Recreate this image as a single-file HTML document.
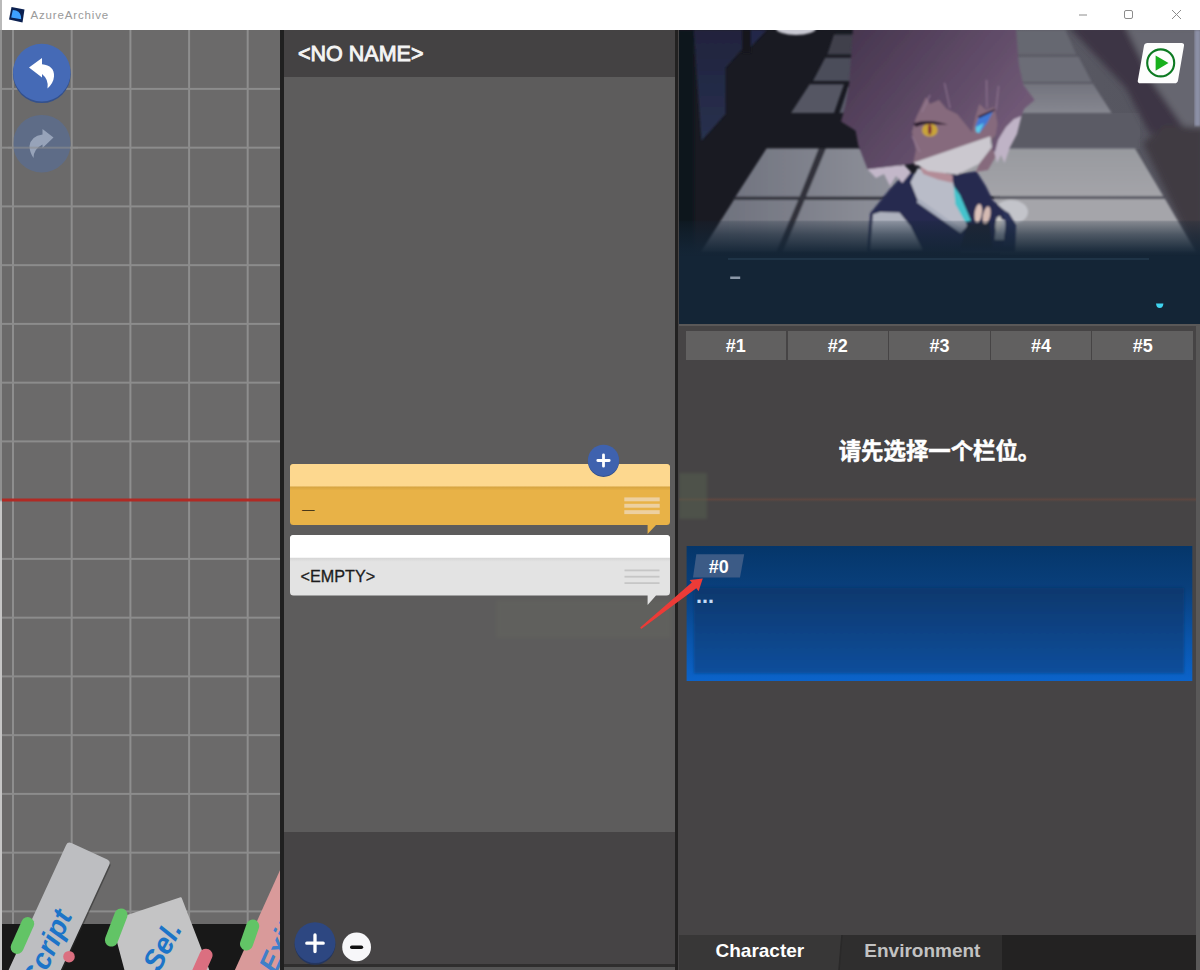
<!DOCTYPE html>
<html lang="zh">
<head>
<meta charset="utf-8">
<title>AzureArchive</title>
<style>
*{box-sizing:border-box;margin:0;padding:0}
html,body{width:1200px;height:970px;overflow:hidden;background:#fff;font-family:"Liberation Sans","Noto Sans CJK SC",sans-serif}
.abs{position:absolute}
#titlebar{position:absolute;left:0;top:0;width:1200px;height:30px;background:#fff;z-index:5}
#titlebar .ttl{position:absolute;left:30.5px;top:9px;font-size:11.5px;color:#9a9a9a;letter-spacing:.85px}
#left{position:absolute;left:0;top:30px;width:281px;height:940px;background:#6b6a6a;overflow:hidden}
#mid{position:absolute;left:284px;top:30px;width:391px;height:940px;background:#5d5c5c;overflow:hidden}
#divL{position:absolute;left:280px;top:30px;width:4px;height:940px;background:linear-gradient(90deg,#6b6a6a 0,#6b6a6a .4px,#202020 .4px,#202020 4px)}
#divR{position:absolute;left:675px;top:30px;width:4px;height:940px;background:linear-gradient(90deg,#222121 0,#222121 2.8px,#464445 2.8px)}
#right{position:absolute;left:679px;top:30px;width:521px;height:940px;background:#464445;overflow:hidden}
#midhead{position:absolute;left:0;top:0;width:391px;height:47px;background:#444243}
#midhead span{position:absolute;left:14px;top:12px;font-size:21.5px;color:#f4f4f4;white-space:nowrap;-webkit-text-stroke:.9px #f4f4f4}
#midfoot{position:absolute;left:0;top:802px;width:391px;height:138px;background:#464445}
.card{position:absolute;left:6px;width:380px;border-radius:4px}
.tab{position:absolute;top:300.500px;height:29.500px;width:100.500px;background:#616060;color:#fff;font-weight:bold;font-size:18px;text-align:center;line-height:31px;overflow:hidden}
</style>
</head>
<body>
<div id="titlebar">
  <div class="abs" style="left:0;top:0;width:2px;height:30px;background:#b9b9b9"></div>
  <svg class="abs" style="left:8px;top:6px" width="20" height="20" viewBox="0 0 20 20"><polygon points="3.5,1 16.5,3.5 14.5,16.5 1,13.5" fill="#0b2050"/><path d="M4.800 4 L8 4.500 Q13.500 6.500 13.200 13.300 L3.200 11.600 Z" fill="#3ea0ff"/></svg>
  <span class="ttl">AzureArchive</span>
  <svg class="abs" style="left:1070px;top:0" width="130" height="30" viewBox="0 0 130 30"><g stroke="#8c8c8c" stroke-width="1" fill="none"><line x1="9" y1="15" x2="17" y2="15"/><rect x="54.5" y="10.5" width="8" height="8" rx="1.5"/><path d="M102 10 L111 19 M111 10 L102 19"/></g></svg>
</div>

<div id="left">
  <svg class="abs" style="left:0;top:0" width="281" height="940" id="gridsvg"><rect x="12.0" y="0" width="2" height="940" fill="#8e8e8e"/><rect x="70.7" y="0" width="2" height="940" fill="#8e8e8e"/><rect x="129.4" y="0" width="2" height="940" fill="#8e8e8e"/><rect x="188.1" y="0" width="2" height="940" fill="#8e8e8e"/><rect x="246.7" y="0" width="2" height="940" fill="#8e8e8e"/><rect x="0" y="57.90" width="281" height="2" fill="#8c8c8c"/><rect x="0" y="116.65" width="281" height="2" fill="#8c8c8c"/><rect x="0" y="175.40" width="281" height="2" fill="#8c8c8c"/><rect x="0" y="234.15" width="281" height="2" fill="#8c8c8c"/><rect x="0" y="292.90" width="281" height="2" fill="#8c8c8c"/><rect x="0" y="351.65" width="281" height="2" fill="#8c8c8c"/><rect x="0" y="410.40" width="281" height="2" fill="#8c8c8c"/><rect x="0" y="527.90" width="281" height="2" fill="#8c8c8c"/><rect x="0" y="586.65" width="281" height="2" fill="#8c8c8c"/><rect x="0" y="645.40" width="281" height="2" fill="#8c8c8c"/><rect x="0" y="704.15" width="281" height="2" fill="#8c8c8c"/><rect x="0" y="762.90" width="281" height="2" fill="#8c8c8c"/><rect x="0" y="821.65" width="281" height="2" fill="#8c8c8c"/><rect x="0" y="880.40" width="281" height="2" fill="#8c8c8c"/><rect x="0" y="468.5" width="281" height="3" fill="#b02a24"/></svg>
  <!-- undo / redo -->
  <svg class="abs" style="left:8px;top:8px" width="70" height="150" viewBox="8 38 70 150">
    <circle cx="41.8" cy="74.3" r="28.8" fill="#33508c"/>
    <circle cx="41.8" cy="72.6" r="28.8" fill="#456ab6"/>
    <path d="M29 67.500 L42 58 L42 64.300 Q54.500 65.500 54 76.500 Q53.500 83 47.500 88.500 Q49 79.500 42 74 L42 77.500 Z" fill="#fff"/>
    <circle cx="41.8" cy="143.7" r="28.8" fill="#5d6c8a" opacity="0.92"/>
    <path d="M53.5 137.5 L42.5 129 L42.500 134.500 Q31 136 29.500 146 Q29.500 152 33.500 158 Q33.500 149 42.500 144.500 L42.500 148 Z" fill="#97a3b9"/>
    <rect x="8" y="146.700" width="70" height="2" fill="#8e8e8e" opacity="0.55"/>
    <rect x="12" y="110" width="2" height="70" fill="#8e8e8e" opacity="0.5"/>
  </svg>
  <!-- bottom black bar -->
  <div class="abs" style="left:2px;top:893.500px;width:279px;height:47px;background:#181818"></div>
  <!-- bottom cards -->
  <svg class="abs" style="left:0;top:780px" width="281" height="160" viewBox="0 810 281 160" font-family="'Liberation Sans',sans-serif">
    <!-- Script card -->
    <g transform="translate(67.800 841.300) rotate(24.700)">
      <rect x="1.500" y="1.500" width="47.500" height="170" rx="4" fill="#2b2b2b" opacity="0.55"/>
      <rect x="0" y="0" width="47.500" height="170" rx="4" fill="#bdbec1"/>
      <text transform="translate(35.500 146) rotate(-90)" font-size="28.500" font-style="italic" font-weight="bold" fill="#1c74c8">Script</text>
    </g>
    <g transform="translate(22.400 935.500) rotate(24)"><rect x="-6.500" y="-19.500" width="13" height="39" rx="6.500" fill="#62c466"/></g>
    <circle cx="69" cy="956.700" r="5.800" fill="#db6f80"/>
    <!-- Sel card -->
    <polygon points="180.800,898.300 127.500,916 117.500,940 126,972 209,972 200.800,950" fill="#c4c4c5" stroke="#c4c4c5" stroke-width="2" stroke-linejoin="round"/>
    <g transform="translate(159 973) rotate(-62)"><text x="0" y="0" font-size="28.500" font-style="italic" font-weight="bold" fill="#1c74c8">Sel.</text></g>
    <g transform="translate(116.200 927.500) rotate(21)"><rect x="-6.500" y="-20" width="13" height="40" rx="6.500" fill="#62c466"/></g>
    <g transform="translate(203 962) rotate(24)"><rect x="-6.500" y="-14" width="13" height="40" rx="6.500" fill="#db6f80"/></g>
    <!-- Ex card -->
    <polygon points="281,868 234,972 281,972" fill="#d99a9a"/>
    <g transform="translate(276 975) rotate(-66)"><text x="0" y="0" font-size="28.500" font-style="italic" font-weight="bold" fill="#3f7fc8">Exit</text></g>
    <g transform="translate(249.600 935) rotate(19)"><rect x="-6.500" y="-16" width="13" height="32" rx="6.500" fill="#62c466"/></g>
  </svg>
  <div class="abs" style="left:0;top:0;width:2px;height:940px;background:linear-gradient(#909090 0,#909090 470px,#c6c6c6 472px)"></div>
</div>
<div id="divL"></div>
<div id="mid">
  <div id="midhead"><span>&lt;NO NAME&gt;</span></div>
  <div id="midfoot"></div>
  <div class="abs" style="left:0;top:934px;width:391px;height:3px;background:#2f2e2e"></div>
  <div class="abs" style="left:0;top:937px;width:391px;height:3px;background:#555"></div>
  <!-- faint ghosts -->
  <div class="abs" style="left:212px;top:570px;width:175px;height:38px;background:#66685f;opacity:.4;filter:blur(2px)"></div>
  <!-- cards -->
  <svg class="abs" style="left:0;top:400px" width="391" height="220" viewBox="284 430 391 220" font-family="'Liberation Sans',sans-serif">
    <defs>
      <linearGradient id="gsh" x1="0" y1="0" x2="0" y2="1"><stop offset="0" stop-color="#000" stop-opacity=".25"/><stop offset="1" stop-color="#000" stop-opacity="0"/></linearGradient>
    </defs>
    <!-- orange card -->
    <path d="M293.500 464 H666.500 Q670 464 670 467.500 V521.500 Q670 525 666.500 525 H656 L647.600 534 V525 H293.500 Q290 525 290 521.500 V467.500 Q290 464 293.500 464 Z" fill="#e8b247"/>
    <path d="M293.500 464 H666.500 Q670 464 670 467.500 V486.500 H290 V467.500 Q290 464 293.500 464 Z" fill="#fdd88f"/>
    <rect x="290" y="486.500" width="380" height="4" fill="url(#gsh)" opacity=".35"/>
    <text x="302" y="514" font-size="12.500" fill="#4a3818">—</text>
    <g fill="#edd0a0"><rect x="624.300" y="497.400" width="35.400" height="3.900"/><rect x="624.300" y="503.800" width="35.400" height="3.900"/><rect x="624.300" y="510.200" width="35.400" height="3.900"/></g>
    <!-- white card -->
    <path d="M293.500 535 H666.500 Q670 535 670 538.500 V592 Q670 595.500 666.500 595.500 H656 L647.600 605 V595.500 H293.500 Q290 595.500 290 592 V538.500 Q290 535 293.500 535 Z" fill="#e3e3e3"/>
    <path d="M293.500 535 H666.500 Q670 535 670 538.500 V557.800 H290 V538.500 Q290 535 293.500 535 Z" fill="#ffffff"/>
    <rect x="290" y="557.800" width="380" height="4" fill="url(#gsh)" opacity=".25"/>
    <text x="300.500" y="582" font-size="16.200" fill="#1c1c1c" stroke="#1c1c1c" stroke-width=".3">&lt;EMPTY&gt;</text>
    <g fill="#c6c6c6"><rect x="624.500" y="569.500" width="35" height="1.800"/><rect x="624.500" y="575.800" width="35" height="1.800"/><rect x="624.500" y="582.200" width="35" height="1.800"/></g>
    <!-- plus -->
    <circle cx="603.500" cy="461.300" r="15.600" fill="#33508c"/>
    <circle cx="603.500" cy="460.300" r="15.600" fill="#3f62ae"/>
    <path d="M603.500 454.800 V466.200 M597.800 460.500 H609.200" stroke="#fff" stroke-width="2.800" stroke-linecap="round"/>
  </svg>
  <!-- footer buttons -->
  <svg class="abs" style="left:0;top:880px" width="120" height="60" viewBox="284 910 120 60">
    <circle cx="315" cy="944.300" r="20.400" fill="#24365f"/>
    <circle cx="315" cy="942.700" r="20.400" fill="#2d4781"/>
    <path d="M315 935 V951.500 M306.800 943.200 H323.200" stroke="#fff" stroke-width="3.300" stroke-linecap="round"/>
    <circle cx="356.600" cy="946.900" r="14.400" fill="#f7f7f9"/>
    <path d="M351.800 947.300 H361.400" stroke="#111" stroke-width="3.600" stroke-linecap="round"/>
  </svg>
</div>
<div id="divR"></div>
<div id="right">
  <svg class="abs" style="left:0;top:0" width="521" height="294" viewBox="679 30 521 294">
    <defs>
      <filter id="b1" x="-5%" y="-5%" width="110%" height="110%"><feGaussianBlur stdDeviation="0.9"/></filter>
      <filter id="b3" x="-20%" y="-20%" width="140%" height="140%"><feGaussianBlur stdDeviation="3"/></filter>
      <filter id="b6" x="-30%" y="-30%" width="160%" height="160%"><feGaussianBlur stdDeviation="6"/></filter>
      <linearGradient id="dlg" x1="0" y1="0" x2="0" y2="1"><stop offset="0" stop-color="#142536" stop-opacity="0"/><stop offset=".05" stop-color="#142536" stop-opacity=".24"/><stop offset=".4" stop-color="#142536" stop-opacity=".6"/><stop offset=".8" stop-color="#142536" stop-opacity=".9"/><stop offset="1" stop-color="#142536" stop-opacity="1"/></linearGradient>
      <linearGradient id="hair" x1="0" y1="0.1" x2="1" y2="0.7"><stop offset="0" stop-color="#47364f"/><stop offset=".5" stop-color="#5d4965"/><stop offset="1" stop-color="#755d7a"/></linearGradient>
      <linearGradient id="tileL" x1="0" y1="0" x2="0" y2="1"><stop offset="0" stop-color="#80838d"/><stop offset="1" stop-color="#9a9da6"/></linearGradient>
      <linearGradient id="tileR" x1="0" y1="0" x2="0" y2="1"><stop offset="0" stop-color="#989a9f"/><stop offset="1" stop-color="#a4a4a9"/></linearGradient><linearGradient id="tileR3" x1="0" y1="0" x2="0" y2="1"><stop offset="0" stop-color="#73747e"/><stop offset="1" stop-color="#868790"/></linearGradient>
      <linearGradient id="bgR" x1="0" y1="0" x2="1" y2="0"><stop offset="0" stop-color="#5a5a64"/><stop offset="1" stop-color="#54545e"/></linearGradient>
      <linearGradient id="wall" x1="0" y1="0" x2="0" y2="1"><stop offset="0" stop-color="#20233d"/><stop offset="1" stop-color="#28314f"/></linearGradient>
      <linearGradient id="tileLh" gradientUnits="userSpaceOnUse" x1="720" y1="0" x2="900" y2="0"><stop offset="0" stop-color="#6f727e"/><stop offset="1" stop-color="#90929b"/></linearGradient>
      <clipPath id="scn"><rect x="679" y="30" width="521" height="294"/></clipPath>
    </defs>
    <g clip-path="url(#scn)">
    <rect x="679" y="30" width="521" height="294" fill="#191a22"/>
    <!-- left wall -->
    <g filter="url(#b1)">
    <rect x="677" y="30" width="17" height="294" fill="#11121a"/>
    <polygon points="693.800,30 743,30 743,48 725.500,67.800 725.500,114 701.500,140.700" fill="url(#wall)"/>
    <rect x="742" y="30" width="9" height="23" fill="#13141e"/>
    <polygon points="751,30 766.700,30 751,46.800" fill="#23284a"/>
    <ellipse cx="796" cy="28.500" rx="20" ry="6.500" fill="#c9c9d3"/>
    </g>
    <!-- right half base -->
    <polygon points="1000,30 1200,30 1200,324 1000,324" fill="url(#bgR)"/>
    <rect x="990" y="113" width="150" height="36" fill="#5b5b65"/>
    <!-- upper-right lighter wall -->
    <g filter="url(#b3)">
      <polygon points="1125,26 1204,26 1204,128 1170,125" fill="#666670"/>
      <polygon points="1066,24 1124,24 1153,83 1183,126 1150,134 1126,88" fill="#3c3644"/>
      <polygon points="1143,143 1165,125 1204,128 1204,260 1190,242" fill="#403a43"/>
    </g>
    <rect x="1194.500" y="30" width="6" height="96" fill="#8c90a6" filter="url(#b1)"/>
    <!-- tiles left of head -->
    <g filter="url(#b1)">
      <polygon points="834,34.600 856,34.600 856,54.500 827.400,54.500" fill="#3f404c"/>
      <polygon points="825.200,57.800 856,57.800 856,81 813,81" fill="#4b4d5a"/>
      <polygon points="809.700,84.300 844,84.300 834,113 791,113" fill="#555764"/>
      <polygon points="848.400,86.500 856,94 856,113 839.500,113" fill="#5a5c69"/>
      <!-- big lower-left tiles -->
      <polygon points="766.600,148.400 900,148.400 900,252 701,252" fill="#30313b"/>
      <polygon points="766.600,148.400 818.600,148.400 799.500,196.800 735.500,196.800" fill="url(#tileLh)"/>
      <polygon points="826,148.400 900,148.400 900,196.800 806,196.800" fill="url(#tileLh)"/>
      <polygon points="734,199.800 798.300,199.800 776,252 701,252" fill="url(#tileLh)"/>
      <polygon points="804.800,199.800 900,199.800 900,252 783,252" fill="url(#tileLh)"/>
      <!-- tiles right of head -->
      <polygon points="1000,30 1065.300,30 1076.300,54.500 1000,54.500" fill="#666771"/>
      <polygon points="1000,56.700 1078.500,56.700 1091.800,82.100 1000,82.100" fill="#6c6d77"/>
      <polygon points="1000,83.700 1092.900,83.700 1111.700,113 1000,113" fill="url(#tileR3)"/>
      <polygon points="960,148.600 1135,148.600 1163.500,196.600 960,196.600" fill="url(#tileR)"/>
      <polygon points="960,199 1165,199 1196,252 960,252" fill="#a5a5aa"/>
      <rect x="994" y="196.600" width="170" height="2.400" fill="#4d4d58"/>
      <rect x="734" y="196.800" width="150" height="3" fill="#30313b"/>
    </g>
    <g filter="url(#b1)">
      <!-- body -->
      <ellipse cx="1011" cy="212" rx="17" ry="12" fill="#c3c4ca"/>
      <polygon points="905,173 889.400,189.500 870.200,213.300 867.400,252 1015,252 1016,226 1007.700,213.300 993,200.500 985.700,185.800 976.500,171.200 952.700,174.800" fill="#272c50"/>
      <polygon points="873,214.300 880,212 899.500,212.400 910.500,226.200 922.400,250 870.200,250" fill="#adb1bd"/>
      <polygon points="917.800,168 952.700,181 957.200,200.500 967.300,226.200 961.800,231.700 941.700,217 917.800,200.500 910.500,182.200" fill="#b9bcc8"/>
      <polygon points="919.600,167 952.700,174.800 952.700,183 938,179.400 923.300,174" fill="#b38c97"/>
      <path d="M917.800 200.500 L961.800 231.700" stroke="#a9aebd" stroke-width="4"/>
      <polygon points="953.600,185.800 960,195 971,220.700 965.500,222.500 955.400,204.200" fill="#45c3cc"/>
      <polygon points="996.700,217 1005.800,220.700 1004,240 994.800,240" fill="#b9bcc4"/>
      <polygon points="1002,209 1009,213 1016,224.300 1013.200,246 1003,246 1006,226" fill="#2a3058"/>
      <polygon points="967.300,224.300 989.300,222.500 993,248 960,248" fill="#222636"/>
      <ellipse cx="978.300" cy="213.300" rx="3.600" ry="9.500" transform="rotate(8 978.300 213.300)" fill="#dcc2ba"/>
      <ellipse cx="986.600" cy="215.200" rx="3.600" ry="9" transform="rotate(12 986.600 215.200)" fill="#d6bbb3"/>
      <ellipse cx="998.500" cy="224" rx="3" ry="8" transform="rotate(8 998.500 224)" fill="#c9c7c4"/>
      <!-- pale hair strands -->
      <polygon points="867.500,169.200 904.200,165 911,172 902.300,183 896,176 890,186 884,174 876,178" fill="#c3b7c9"/>
            <!-- face -->
      <polygon points="905,118 922,92 942.700,96 968.300,100 999,100 999,130.700 992,140 915.200,166 903,140" fill="#866b7d"/>
      <polygon points="913.300,162.700 990.300,136.200 992,147.200 979.300,163.700 957.300,174.700 928,171" fill="#cbc8cf"/>
      <polygon points="979.300,163.700 992,147.200 996,156 988,170 976,172" fill="#866b7d"/>
      <!-- hair -->
      <path d="M853 28 L1016 28 L1018.800 64.700 L1023.300 84.800 L1034.700 99.900 L1024.200 108.700 L1021.500 116 L1014 131 L1005 146 L999.500 153 L994.500 141 L997.500 124 L994.500 107 L986 110 L979.300 104 L975.700 116 L972 132.500 L957.300 114.200 L946.300 108.700 L939 100 L930 104 L926 97 L916 118 L912 132 L916 150 L913.300 163.700 L867.500 169.200 L858.300 145.300 L855.600 130.700 L841 121.500 L845.500 105 L849.200 83 Z" fill="url(#hair)"/>
      <polygon points="1021.500,116 1017,134 1010,147.200 1004.500,163 1001,155 997,163 994,151 998,140 1006,127 1014,119" fill="#bfb3c6"/>
      <polygon points="992,140 999,136 995,152 992,150" fill="#6d5673"/>
      <g stroke="#9a7f9b" stroke-width="1.100" fill="none" opacity=".8"><path d="M944.500 83 L950 108"/><path d="M986.500 80 L987 108"/><path d="M998.500 86 L996 110"/><path d="M930 95 L922 112"/><path d="M912 136 L920 152"/></g>
      <!-- eyes -->
      <ellipse cx="929.800" cy="130" rx="7.800" ry="6.600" fill="#c9a437"/>
      <ellipse cx="929.800" cy="129.500" rx="1.700" ry="5.200" fill="#7a1f38"/>
      <path d="M913 123.500 Q925 119.500 938 122 L948 124.500 L938 124.500 Q925 122.500 916 127 Z" fill="#2c1c2e"/>
      <polygon points="975.700,126 979.300,116 994,109.600 987,123 979.300,133 976,132" fill="#3f78d6"/>
      <polygon points="975.700,127 984,123 979.300,133 976,132" fill="#5cc9ea"/>
      <path d="M977.500 116.500 L995.500 108.500 L994 111 L979.300 118 Z" fill="#2c1c2e"/>
    </g>
    <!-- dialogue overlay -->
    <rect x="679" y="220" width="521" height="36" fill="url(#dlg)"/>
    <rect x="679" y="255.800" width="521" height="69" fill="#142536"/>
    <rect x="728" y="258.200" width="421" height="1.600" fill="#24394d"/>
    <rect x="730.200" y="276.500" width="10" height="2.500" fill="#8b98a8"/>
    <path d="M1156 303.500 H1163.400 Q1163 308 1159.700 308 Q1156.400 308 1156 303.500 Z" fill="#3fd4f0"/>
    <!-- play button -->
    <path d="M1147.500 43 H1181.500 Q1184.400 43 1184 45.800 L1178 80.400 Q1177.500 83.200 1174.700 83.200 H1140.500 Q1137.300 83.200 1137.800 80.400 L1144 45.800 Q1144.500 43 1147.500 43 Z" fill="#fdfdfd"/>
    <circle cx="1160.700" cy="62.900" r="13.500" fill="none" stroke="#0d7a22" stroke-width="2.100"/>
    <polygon points="1155.600,55.400 1168.500,63 1155.600,70.800" fill="#17b01c"/>
    </g>
  </svg>
  <div class="abs" style="left:0;top:294px;width:521px;height:2px;background:#5a5858"></div>
  <!-- slot tabs -->
  <div class="tab" style="left:6.500px">#1</div>
  <div class="tab" style="left:108.600px">#2</div>
  <div class="tab" style="left:210.200px">#3</div>
  <div class="tab" style="left:311.800px">#4</div>
  <div class="tab" style="left:413.400px">#5</div>
  <div class="abs" id="msg" style="left:0;top:407.500px;width:521px;text-align:center;font-size:22.4px;font-weight:bold;color:#fff;line-height:28px;white-space:nowrap;-webkit-text-stroke:.5px #fff">请先选择一个栏位。</div>
  <div class="abs" style="left:0;top:467px;width:521px;height:5px;background:linear-gradient(#0000,#7a4a3a66,#0000)"></div>
  <div class="abs" style="left:0;top:443px;width:28px;height:46px;background:#56604f;opacity:.5;filter:blur(1.5px)"></div>
  <!-- blue panel -->
  <svg class="abs" style="left:0;top:505px" width="521" height="160" viewBox="679 535 521 160" font-family="'Liberation Sans',sans-serif">
    <defs>
      <linearGradient id="gb" x1="0" y1="0" x2="0" y2="1"><stop offset="0" stop-color="#05366a"/><stop offset=".3" stop-color="#093f7b"/><stop offset=".7" stop-color="#0a55ab"/><stop offset="1" stop-color="#0b63ca"/></linearGradient><linearGradient id="gbi" x1="0" y1="0" x2="0" y2="1"><stop offset="0" stop-color="#07386d"/><stop offset="1" stop-color="#0a4e9c"/></linearGradient>
      <filter id="bb" x="-2%" y="-5%" width="104%" height="110%"><feGaussianBlur stdDeviation="0.8"/></filter><linearGradient id="gbl" x1="0" y1="0" x2="1" y2="0"><stop offset="0" stop-color="#1273dc" stop-opacity=".4"/><stop offset="1" stop-color="#1273dc" stop-opacity="0"/></linearGradient>
      <linearGradient id="gbr" x1="1" y1="0" x2="0" y2="0"><stop offset="0" stop-color="#1273dc" stop-opacity=".3"/><stop offset="1" stop-color="#1273dc" stop-opacity="0"/></linearGradient>
    </defs>
    <rect x="686.600" y="546" width="505.700" height="135" fill="url(#gb)"/>
    <rect x="693.800" y="587.500" width="490.400" height="86" fill="url(#gbi)" filter="url(#bb)"/>
    <polygon points="696.300,554.200 744.200,554.200 740,577.500 693,577.500" fill="#3c5b86"/>
    <text x="718.800" y="573" font-size="18" font-weight="bold" fill="#fff" text-anchor="middle">#0</text>
    <text x="695.900" y="603.300" font-size="21.600" font-weight="bold" fill="#c4dcf7">...</text>
  </svg>
  <div class="abs" style="left:517px;top:294px;width:4px;height:646px;background:#595858;z-index:3"></div>
  <!-- bottom tabs -->
  <div class="abs" style="left:0;top:905px;width:521px;height:35px;background:#232222"></div>
  <div class="abs" style="left:0;top:905px;width:323px;height:35px;background:#2f2e2e"></div>
  <svg class="abs" style="left:0;top:905px" width="330" height="35" viewBox="0 0 330 35"><polygon points="0,0 162.500,0 160,35 0,35" fill="#383737"/><path d="M163 0 L160 35" stroke="#2a2929" stroke-width="1.500"/></svg>
  <div class="abs" style="left:36.500px;top:909px;font-size:19px;font-weight:bold;color:#fff;line-height:24px">Character</div>
  <div class="abs" style="left:185.300px;top:909px;font-size:19px;font-weight:bold;color:#c2c2c2;line-height:24px">Environment</div>
</div>
<svg class="abs" style="left:630px;top:570px" width="80" height="65" viewBox="630 570 80 65">
  <path d="M640.200 627.600 L691.800 582.600 L689.600 580 L702.800 578.500 L698.600 591.200 L696.300 588.300 L641.200 628.900 Z" fill="#ec3b37"/>
</svg>
</body>
</html>
